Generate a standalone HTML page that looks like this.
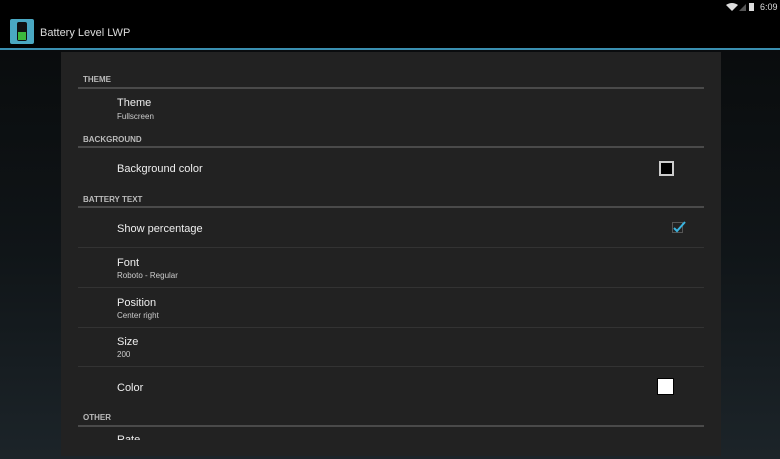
<!DOCTYPE html>
<html><head><style>
body{margin:0;width:780px;height:459px;overflow:hidden;background:linear-gradient(180deg,#080a0b 0%,#101518 55%,#1c2429 100%);font-family:"Liberation Sans",sans-serif;position:relative}
.top{position:absolute;left:0;top:0;width:780px;height:48px;background:#000;border-bottom:2px solid #3a8fb0}
.panel{position:absolute;left:61px;top:52px;width:660px;height:404px;background:#222}
.t{position:absolute;color:#eee;font-size:11px;white-space:nowrap}
.s{position:absolute;color:#ccc;font-size:8px}
.h{position:absolute;left:83px;color:#bbb;font-size:8px;font-weight:bold}
.hl{position:absolute;left:78px;width:626px;height:2px;background:#4a4a4a}
.dl{position:absolute;left:78px;width:626px;height:1px;background:#333}
</style></head><body>
<div class="top"></div>
<div style="position:absolute;left:10px;top:19px;width:24px;height:25px;background:#4aa8c2;border-radius:2px"></div>
<div style="position:absolute;left:17px;top:22px;width:10px;height:19px;background:#111;border-radius:2px"></div>
<div style="position:absolute;left:18px;top:32px;width:8px;height:8px;background:#3cb83c"></div>
<div class="t" style="left:40px;top:27px;font-size:11px;color:#ddd">Battery Level LWP</div>
<svg style="position:absolute;left:726px;top:2px" width="30" height="10"><path d="M0 3 Q6 -1 12 3 L6 9 Z" fill="#ddd"/><path d="M13 9 L20 2 L20 9 Z" fill="#555"/><rect x="23" y="1" width="5" height="8" fill="#ddd"/></svg>
<div class="t" style="left:760px;top:2px;font-size:9px;color:#ddd">6:09</div>
<div class="panel"></div>
<div class="h" style="top:75px">THEME</div><div class="hl" style="top:87px"></div>
<div class="t" style="left:117px;top:97px">Theme</div><div class="s" style="left:117px;top:112px">Fullscreen</div>
<div class="h" style="top:135px">BACKGROUND</div><div class="hl" style="top:146px"></div>
<div class="t" style="left:117px;top:163px">Background color</div>
<div style="position:absolute;left:659px;top:161px;width:11px;height:11px;border:2px solid #ccc;background:#000"></div>
<div class="h" style="top:195px">BATTERY TEXT</div><div class="hl" style="top:206px"></div>
<div class="t" style="left:117px;top:223px">Show percentage</div>
<svg style="position:absolute;left:672px;top:220px" width="14" height="13"><rect x="0.5" y="2.5" width="10" height="10" fill="none" stroke="#555"/><path d="M2 8 L5 11 L13 2" stroke="#3ab4e0" stroke-width="2" fill="none"/></svg>
<div class="dl" style="top:247px"></div>
<div class="t" style="left:117px;top:257px">Font</div><div class="s" style="left:117px;top:271px">Roboto - Regular</div>
<div class="dl" style="top:287px"></div>
<div class="t" style="left:117px;top:297px">Position</div><div class="s" style="left:117px;top:311px">Center right</div>
<div class="dl" style="top:327px"></div>
<div class="t" style="left:117px;top:336px">Size</div><div class="s" style="left:117px;top:350px">200</div>
<div class="dl" style="top:366px"></div>
<div class="t" style="left:117px;top:382px">Color</div>
<div style="position:absolute;left:657px;top:378px;width:15px;height:15px;border:1px solid #000;background:#fff"></div>
<div class="h" style="top:413px">OTHER</div><div class="hl" style="top:425px"></div>
<div style="position:absolute;left:117px;top:434px;width:60px;height:6px;overflow:hidden"><div class="t" style="left:0;top:0">Rate</div></div>
</body></html>
